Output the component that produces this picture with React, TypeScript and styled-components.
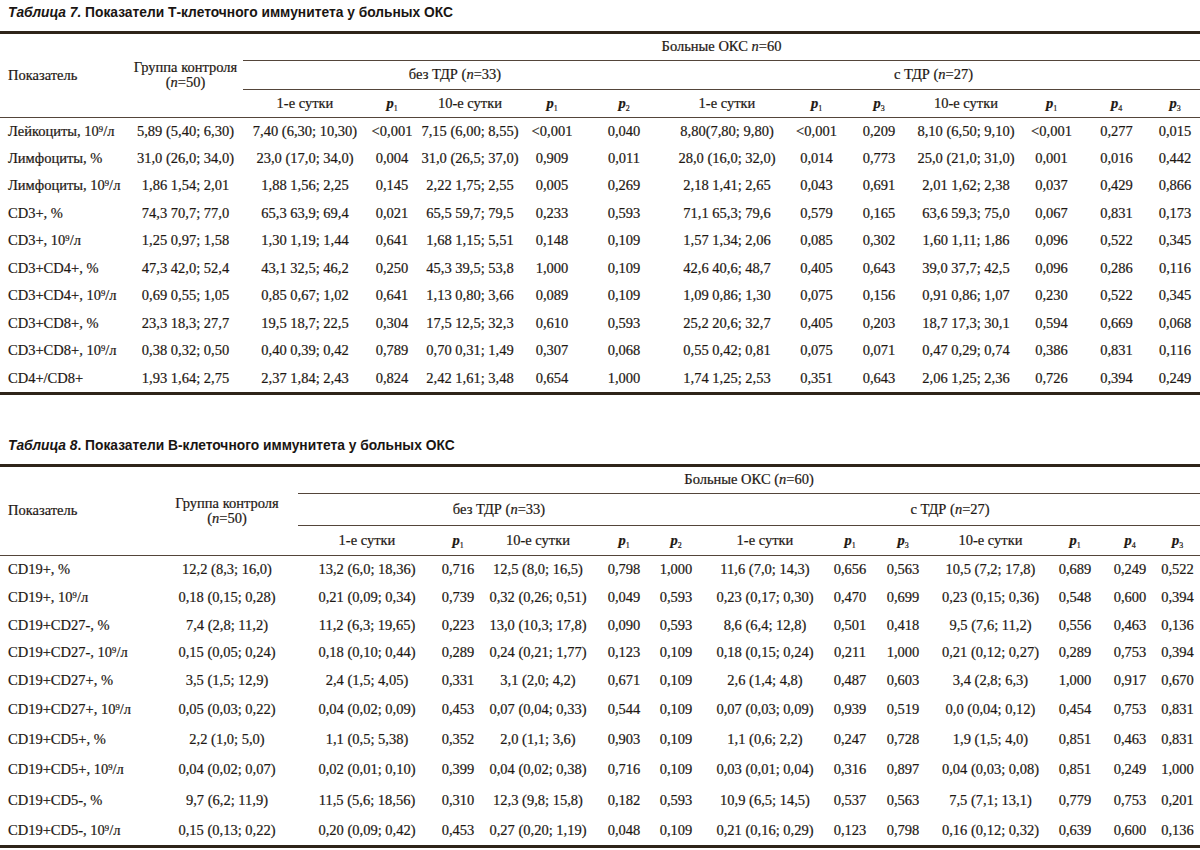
import React from "react";
import styled, { createGlobalStyle } from "styled-components";

const Global = createGlobalStyle`
  html, body { margin: 0; padding: 0; background: #ffffff; }
  body {
    font-family: "Liberation Serif", "Times New Roman", serif;
    color: #1e1813;
  }
`;

const Page = styled.main`
  width: 1200px;
  padding-top: 5px;
  display: flex;
  flex-direction: column;
`;

const Section = styled.section<{ $gap: number }>`
  margin-top: ${(p) => p.$gap}px;
  display: flex;
  flex-direction: column;
`;

const Caption = styled.h2`
  margin: 0 0 10px 8px;
  font-family: "Liberation Sans", Arial, sans-serif;
  font-size: 13.8px;
  line-height: 16px;
  font-weight: 700;
  color: #1a1512;
`;

const CaptionLabel = styled.em`
  font-style: italic;
`;

const Frame = styled.div`
  border-top: 3px solid #2f2419;
  border-bottom: 3px solid #2f2419;
`;

const Grid = styled.table`
  width: 1200px;
  table-layout: fixed;
  border-collapse: collapse;
  font-size: 14.5px;
  -webkit-text-stroke: 0.2px #1e1813;
`;

const HeadRow = styled.tr<{ $h: number }>`
  height: ${(p) => p.$h}px;
`;

const HeadCell = styled.th<{ $line?: boolean; $left?: boolean }>`
  padding: 0;
  padding-left: ${(p) => (p.$left ? "8px" : "0")};
  font-weight: 400;
  line-height: 15px;
  text-align: ${(p) => (p.$left ? "left" : "center")};
  vertical-align: middle;
  border-bottom: ${(p) => (p.$line ? "1px solid #54453a" : "0")};
  white-space: nowrap;
`;

const BodyRow = styled.tr<{ $h: number }>`
  height: ${(p) => p.$h}px;
`;

const Cell = styled.td<{ $left?: boolean }>`
  padding: 0;
  padding-left: ${(p) => (p.$left ? "8px" : "0")};
  text-align: ${(p) => (p.$left ? "left" : "center")};
  vertical-align: middle;
  white-space: nowrap;
  line-height: 15px;
`;

const Sup = styled.sup`
  font-size: 0.6em;
  line-height: 0;
  vertical-align: 0.5em;
`;

const PLabel = styled.span`
  font-style: italic;
  font-weight: 700;
`;

const Sub = styled.sub`
  font-size: 0.55em;
  font-style: normal;
  font-weight: 400;
  line-height: 0;
  vertical-align: -0.35em;
`;

const N = styled.i`
  font-style: italic;
`;

type TableSpec = {
  label: string;
  title: string;
  widths: number[];
  headHeights: number[];
  rowHeights: number[];
  patients: React.ReactNode;
  rows: string[][];
};

const subCols: [string, string | null][] = [
  ["1-е сутки", null],
  ["p", "1"],
  ["10-е сутки", null],
  ["p", "1"],
  ["p", "2"],
  ["1-е сутки", null],
  ["p", "1"],
  ["p", "3"],
  ["10-е сутки", null],
  ["p", "1"],
  ["p", "4"],
  ["p", "3"],
];

function renderText(t: string) {
  const parts = t.split("^9");
  if (parts.length === 1) return t;
  return (
    <>
      {parts[0]}
      <Sup>9</Sup>
      {parts[1]}
    </>
  );
}

const table7: TableSpec = {
  label: "Таблица 7.",
  title: " Показатели Т-клеточного иммунитета у больных ОКС",
  widths: [128, 115, 124, 50, 106, 58, 86, 120, 59, 66, 108, 63, 67, 50],
  headHeights: [26, 29, 28],
  rowHeights: Array(10).fill(27.5),
  patients: (
    <>
      Больные ОКС <N>n</N>=60
    </>
  ),
  rows: [
    ["Лейкоциты, 10^9/л", "5,89 (5,40; 6,30)", "7,40 (6,30; 10,30)", "<0,001", "7,15 (6,00; 8,55)", "<0,001", "0,040", "8,80(7,80; 9,80)", "<0,001", "0,209", "8,10 (6,50; 9,10)", "<0,001", "0,277", "0,015"],
    ["Лимфоциты, %", "31,0 (26,0; 34,0)", "23,0 (17,0; 34,0)", "0,004", "31,0 (26,5; 37,0)", "0,909", "0,011", "28,0 (16,0; 32,0)", "0,014", "0,773", "25,0 (21,0; 31,0)", "0,001", "0,016", "0,442"],
    ["Лимфоциты, 10^9/л", "1,86 1,54; 2,01", "1,88 1,56; 2,25", "0,145", "2,22 1,75; 2,55", "0,005", "0,269", "2,18 1,41; 2,65", "0,043", "0,691", "2,01 1,62; 2,38", "0,037", "0,429", "0,866"],
    ["CD3+, %", "74,3 70,7; 77,0", "65,3 63,9; 69,4", "0,021", "65,5 59,7; 79,5", "0,233", "0,593", "71,1 65,3; 79,6", "0,579", "0,165", "63,6 59,3; 75,0", "0,067", "0,831", "0,173"],
    ["CD3+, 10^9/л", "1,25 0,97; 1,58", "1,30 1,19; 1,44", "0,641", "1,68 1,15; 5,51", "0,148", "0,109", "1,57 1,34; 2,06", "0,085", "0,302", "1,60 1,11; 1,86", "0,096", "0,522", "0,345"],
    ["CD3+CD4+, %", "47,3 42,0; 52,4", "43,1 32,5; 46,2", "0,250", "45,3 39,5; 53,8", "1,000", "0,109", "42,6 40,6; 48,7", "0,405", "0,643", "39,0 37,7; 42,5", "0,096", "0,286", "0,116"],
    ["CD3+CD4+, 10^9/л", "0,69 0,55; 1,05", "0,85 0,67; 1,02", "0,641", "1,13 0,80; 3,66", "0,089", "0,109", "1,09 0,86; 1,30", "0,075", "0,156", "0,91 0,86; 1,07", "0,230", "0,522", "0,345"],
    ["CD3+CD8+, %", "23,3 18,3; 27,7", "19,5 18,7; 22,5", "0,304", "17,5 12,5; 32,3", "0,610", "0,593", "25,2 20,6; 32,7", "0,405", "0,203", "18,7 17,3; 30,1", "0,594", "0,669", "0,068"],
    ["CD3+CD8+, 10^9/л", "0,38 0,32; 0,50", "0,40 0,39; 0,42", "0,789", "0,70 0,31; 1,49", "0,307", "0,068", "0,55 0,42; 0,81", "0,075", "0,071", "0,47 0,29; 0,74", "0,386", "0,831", "0,116"],
    ["CD4+/CD8+", "1,93 1,64; 2,75", "2,37 1,84; 2,43", "0,824", "2,42 1,61; 3,48", "0,654", "1,000", "1,74 1,25; 2,53", "0,351", "0,643", "2,06 1,25; 2,36", "0,726", "0,394", "0,249"],
  ],
};

const table8: TableSpec = {
  label: "Таблица 8",
  title: ". Показатели В-клеточного иммунитета у больных ОКС",
  widths: [156, 142, 138, 44, 116, 56, 48, 130, 40, 66, 109, 60, 50, 45],
  headHeights: [26, 32, 30],
  rowHeights: [28, 28, 28, 27, 29, 29, 30, 31, 30, 30],
  patients: (
    <>
      Больные ОКС (<N>n</N>=60)
    </>
  ),
  rows: [
    ["CD19+, %", "12,2 (8,3; 16,0)", "13,2 (6,0; 18,36)", "0,716", "12,5 (8,0; 16,5)", "0,798", "1,000", "11,6 (7,0; 14,3)", "0,656", "0,563", "10,5 (7,2; 17,8)", "0,689", "0,249", "0,522"],
    ["CD19+, 10^9/л", "0,18 (0,15; 0,28)", "0,21 (0,09; 0,34)", "0,739", "0,32 (0,26; 0,51)", "0,049", "0,593", "0,23 (0,17; 0,30)", "0,470", "0,699", "0,23 (0,15; 0,36)", "0,548", "0,600", "0,394"],
    ["CD19+CD27-, %", "7,4 (2,8; 11,2)", "11,2 (6,3; 19,65)", "0,223", "13,0 (10,3; 17,8)", "0,090", "0,593", "8,6 (6,4; 12,8)", "0,501", "0,418", "9,5 (7,6; 11,2)", "0,556", "0,463", "0,136"],
    ["CD19+CD27-, 10^9/л", "0,15 (0,05; 0,24)", "0,18 (0,10; 0,44)", "0,289", "0,24 (0,21; 1,77)", "0,123", "0,109", "0,18 (0,15; 0,24)", "0,211", "1,000", "0,21 (0,12; 0,27)", "0,289", "0,753", "0,394"],
    ["CD19+CD27+, %", "3,5 (1,5; 12,9)", "2,4 (1,5; 4,05)", "0,331", "3,1 (2,0; 4,2)", "0,671", "0,109", "2,6 (1,4; 4,8)", "0,487", "0,603", "3,4 (2,8; 6,3)", "1,000", "0,917", "0,670"],
    ["CD19+CD27+, 10^9/л", "0,05 (0,03; 0,22)", "0,04 (0,02; 0,09)", "0,453", "0,07 (0,04; 0,33)", "0,544", "0,109", "0,07 (0,03; 0,09)", "0,939", "0,519", "0,0 (0,04; 0,12)", "0,454", "0,753", "0,831"],
    ["CD19+CD5+, %", "2,2 (1,0; 5,0)", "1,1 (0,5; 5,38)", "0,352", "2,0 (1,1; 3,6)", "0,903", "0,109", "1,1 (0,6; 2,2)", "0,247", "0,728", "1,9 (1,5; 4,0)", "0,851", "0,463", "0,831"],
    ["CD19+CD5+, 10^9/л", "0,04 (0,02; 0,07)", "0,02 (0,01; 0,10)", "0,399", "0,04 (0,02; 0,38)", "0,716", "0,109", "0,03 (0,01; 0,04)", "0,316", "0,897", "0,04 (0,03; 0,08)", "0,851", "0,249", "1,000"],
    ["CD19+CD5-, %", "9,7 (6,2; 11,9)", "11,5 (5,6; 18,56)", "0,310", "12,3 (9,8; 15,8)", "0,182", "0,593", "10,9 (6,5; 14,5)", "0,537", "0,563", "7,5 (7,1; 13,1)", "0,779", "0,753", "0,201"],
    ["CD19+CD5-, 10^9/л", "0,15 (0,13; 0,22)", "0,20 (0,09; 0,42)", "0,453", "0,27 (0,20; 1,19)", "0,048", "0,109", "0,21 (0,16; 0,29)", "0,123", "0,798", "0,16 (0,12; 0,32)", "0,639", "0,600", "0,136"],
  ],
};

function DataTable({ spec, gap }: { spec: TableSpec; gap: number }) {
  return (
    <Section $gap={gap}>
      <Caption>
        <CaptionLabel>{spec.label}</CaptionLabel>
        {spec.title}
      </Caption>
      <Frame>
        <Grid>
          <colgroup>
            {spec.widths.map((w, i) => (
              <col key={i} style={{ width: w }} />
            ))}
          </colgroup>
          <thead>
            <HeadRow $h={spec.headHeights[0]}>
              <HeadCell rowSpan={3} $left $line>
                Показатель
              </HeadCell>
              <HeadCell rowSpan={3} $line>
                Группа контроля
                <br />(<N>n</N>=50)
              </HeadCell>
              <HeadCell colSpan={12} $line>
                {spec.patients}
              </HeadCell>
            </HeadRow>
            <HeadRow $h={spec.headHeights[1]}>
              <HeadCell colSpan={5} $line>
                без ТДР (<N>n</N>=33)
              </HeadCell>
              <HeadCell colSpan={7} $line>
                с ТДР (<N>n</N>=27)
              </HeadCell>
            </HeadRow>
            <HeadRow $h={spec.headHeights[2]}>
              {subCols.map(([t, s], i) => (
                <HeadCell key={i} $line>
                  {s ? (
                    <PLabel>
                      {t}
                      <Sub>{s}</Sub>
                    </PLabel>
                  ) : (
                    t
                  )}
                </HeadCell>
              ))}
            </HeadRow>
          </thead>
          <tbody>
            {spec.rows.map((row, r) => (
              <BodyRow key={r} $h={spec.rowHeights[r]}>
                {row.map((v, c) => (
                  <Cell key={c} $left={c === 0}>
                    {renderText(v)}
                  </Cell>
                ))}
              </BodyRow>
            ))}
          </tbody>
        </Grid>
      </Frame>
    </Section>
  );
}

export default function App() {
  return (
    <>
      <Global />
      <Page>
        <DataTable spec={table7} gap={0} />
        <DataTable spec={table8} gap={43} />
      </Page>
    </>
  );
}
